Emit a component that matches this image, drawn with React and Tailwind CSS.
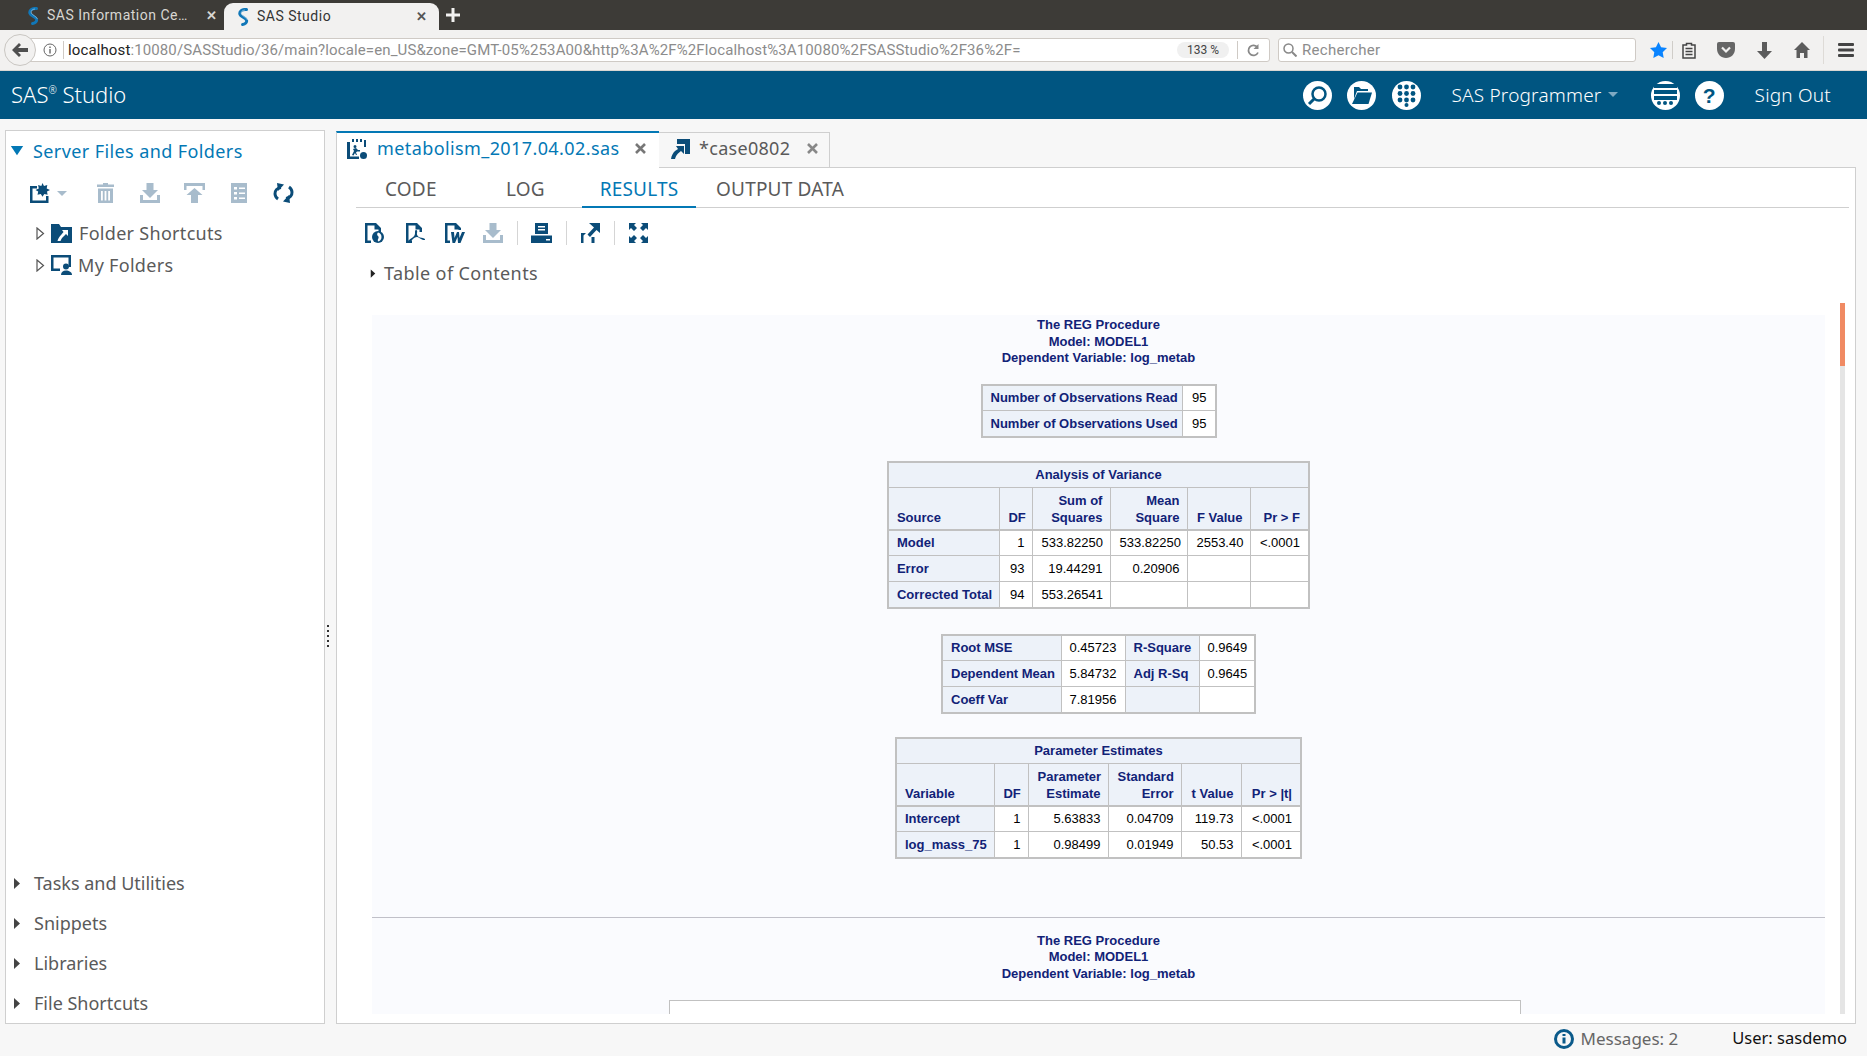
import React from 'react';

const NAVY = '#0b4c78';
const MUTED = '#a8bccc';
const APP_FONT = "font-['Noto_Sans',sans-serif]";

const SasLogo = () => (
  <svg width="12" height="18" viewBox="0 0 12 18" fill="none">
    <path d="M9.500 1.500C5 1 2 3.500 3 6.500c.8 2.400 6 3.400 6.600 6 .4 1.800-1.200 3.600-4 4" stroke="#1177b8" strokeWidth="3" strokeLinecap="round" />
    <path d="M8 2C5 2.200 3.800 4 4.300 6c.7 2 5.500 3.600 6.200 6" stroke="#fff" strokeWidth=".6" opacity=".7" />
  </svg>
);

const Tri = ({ dir = 'right', className = 'text-[#555]', size = 8 }) => (
  <svg width={size} height={size + 3} viewBox="0 0 8 11" className={className}>
    {dir === 'right' ? <path d="M1 0l6 5.500L1 11z" fill="currentColor" /> : <path d="M0 2h8L4 8z" fill="currentColor" />}
  </svg>
);

const TreeArrow = () => (
  <svg width="9" height="13" viewBox="0 0 9 13"><path d="M1 1l6.500 5.500L1 12z" fill="#fff" stroke="#555" strokeWidth="1.200" /></svg>
);

const NewIcon = () => (
  <svg width="20" height="20" viewBox="0 0 20 20" fill={NAVY}>
    <path d="M0 3h7v2.500H2.500v12H16V13h2.500v7H0z" />
    <path d="M12.500 0l1.500 3 3.300-1-.6 3.400L20 7l-3 1.500.6 3.300-3.300-.9-1.800 2.800-1.700-2.800-3.300.9.700-3.300L5.500 7l3.300-1.600-.7-3.400 3.200 1z" />
  </svg>
);
const TrashIcon = () => (
  <svg width="17" height="20" viewBox="0 0 17 20" fill={MUTED}>
    <path d="M6 0h5v1.500h6V4H0V1.500h6zM1 5.500h15V20H1zM4 8v9.500h1.800V8zM7.600 8v9.500h1.800V8zM11.200 8v9.500H13V8z" fillRule="evenodd" />
  </svg>
);
const DownloadIcon = ({ color = MUTED }) => (
  <svg width="20" height="20" viewBox="0 0 20 20" fill={color}>
    <path d="M6.500 0h7v7H18l-8 8-8-8h4.500z" />
    <path d="M0 12h3v5h14v-5h3v8H0z" />
  </svg>
);
const UploadIcon = () => (
  <svg width="21" height="20" viewBox="0 0 21 20" fill={MUTED}>
    <path d="M0 0h21v7h-2.500V3h-16v4H0z" />
    <path d="M10.500 5l8 7H14v8H7v-8H2.500z" />
  </svg>
);
const ChecklistIcon = () => (
  <svg width="16" height="20" viewBox="0 0 16 20">
    <path d="M0 0h16v20H0z" fill={MUTED} />
    <path d="M3 4h3v2.500H3zM8 4.500h6V6H8zM3 9h3v2.500H3zM8 9.500h6V11H8zM3 14h3v2.500H3zM8 14.500h6V16H8z" fill="#fff" />
  </svg>
);
const RefreshIcon = () => (
  <svg width="21" height="20" viewBox="0 0 21 20" fill="none">
    <path d="M8 4.500C4 5 1.800 8 2 11c.2 2.500 1.500 4 3 5" stroke={NAVY} strokeWidth="3" />
    <path d="M4 0l7 1.500L5 8z" fill={NAVY} />
    <path d="M13 15.500c4-.5 6.200-3.500 6-6.500-.2-2.500-1.500-4-3-5" stroke={NAVY} strokeWidth="3" />
    <path d="M17 20l-7-1.500 6-6.500z" fill={NAVY} />
  </svg>
);
const FolderShortcutIcon = () => (
  <svg width="21" height="19" viewBox="0 0 21 19">
    <path d="M0 0h8l2 3h11v16H0z" fill={NAVY} />
    <path d="M11 6h6v6l-2-2-3 3c-1 1-2 2.500-2.500 4H6.500c.5-2.500 2-4.500 3.500-6l2.500-3z" fill="#fff" />
  </svg>
);
const MyFoldersIcon = () => (
  <svg width="21" height="20" viewBox="0 0 21 20">
    <path d="M0 0h20v12h-2.500V2.500h-15v11H9V16H0z" fill={NAVY} />
    <circle cx="15" cy="11.500" r="3" fill={NAVY} />
    <path d="M10 20c0-3 2-4.500 5-4.500s6 1.500 6 4.500z" fill={NAVY} />
  </svg>
);
const ProgramIcon = () => (
  <svg width="20" height="20" viewBox="0 0 20 20">
    <path d="M0 3h3v14.500h9V20H0z" fill={NAVY} />
    <path d="M5 0h2v3H5zM9 0h2v3H9zM13 0h2v3h-2zM17 1h2v7h-2z" fill={NAVY} />
    <path d="M8 6a1.500 1.500 0 1 1 0 3 1.500 1.500 0 0 1 0-3zM5 16l2-4-1-2 3-1 2 2h2v1.500h-3l-1 1 1 2.500H9l-1-2-1.500 2.500z" fill={NAVY} />
    <circle cx="16.500" cy="16.500" r="3.500" fill={NAVY} />
  </svg>
);
const ShortcutIcon = () => (
  <svg width="19" height="20" viewBox="0 0 19 20">
    <path d="M6 0h13v15h-5V5H6z" fill={NAVY} />
    <path d="M5 7h8v8l-3-3-3 2.500C5.500 16 4.500 18 4 20H0c.5-3.500 2-6 4-8l3-2z" fill={NAVY} />
  </svg>
);
const HtmlDocIcon = () => (
  <svg width="19" height="20" viewBox="0 0 19 20">
    <path d="M0 0h11l5 5v4h-2.500V6.500H9.500v-4h-7v15H6V20H0z" fill={NAVY} />
    <circle cx="13" cy="14" r="6" fill={NAVY} />
    <path d="M13 9.500c-1 1-1 2-.5 3s1.500 1 1 2.500-1 1.500-.5 3.500c2-.5 3.500-2 3.500-4.500s-1.500-4-3.500-4.500z" fill="#fff" />
  </svg>
);
const PdfDocIcon = () => (
  <svg width="19" height="20" viewBox="0 0 19 20">
    <path d="M0 0h11l5 5v4h-2.500V6.500H9.500v-4h-7v15H6V20H0z" fill={NAVY} />
    <path d="M10 7c1 0 1.500 1 1 3s1 4 3 4.500 4 .5 5 1.500-1 1.500-3 .5-3.500-2.500-5-2.500-3.500 1-5 3-2 3.500-3 2 1-3 3.500-4.500 2.500-3.500 2.500-5S9 7 10 7z" fill={NAVY} />
  </svg>
);
const WordDocIcon = () => (
  <svg width="20" height="20" viewBox="0 0 20 20">
    <path d="M0 0h11l5 5v2h-2.500v-.500H9.500v-4h-7v15H5V20H0z" fill={NAVY} />
    <path d="M6 9h3l.5 6 2.500-6h2l.5 6 2.500-6H20l-4.500 11h-2.500l-.5-6-2.500 6H7.500z" fill={NAVY} />
  </svg>
);
const PrintIcon = () => (
  <svg width="21" height="20" viewBox="0 0 21 20">
    <path d="M4 0h13v11H4z" fill={NAVY} />
    <path d="M7 3h7v1.500H7zM7 6h7v1.500H7z" fill="#fff" />
    <path d="M0 12.500h21V20H0z" fill={NAVY} />
    <path d="M15 16h4v1.500h-4z" fill="#fff" />
  </svg>
);
const ExpandOutIcon = () => (
  <svg width="19" height="20" viewBox="0 0 19 20">
    <path d="M8 0h11v10l-3.500-3L9 14l-2.500-2.500L13 4.500z" fill={NAVY} />
    <path d="M0 10h5l-2.500 2.500V20H0zM10.500 14h3v6h-3z" fill={NAVY} />
  </svg>
);
const FullscreenIcon = () => (
  <svg width="19" height="20" viewBox="0 0 19 20" fill={NAVY}>
    <path d="M0 0h7L5 2l3 3-3 3-3-3-2 2zM19 0h-7l2 2-3 3 3 3 3-3 2 2zM0 20h7l-2-2 3-3-3-3-3 3-2-2zM19 20h-7l2-2-3-3 3-3 3 3 2-2z" />
  </svg>
);

const HeaderCircle = ({ children }) => (
  <div className="w-[29px] h-[29px] rounded-full bg-white flex items-center justify-center shrink-0">{children}</div>
);

function BrowserTabs() {
  return (
    <div className="h-[30px] bg-[#3d3b37] flex items-end shrink-0 font-['Roboto',sans-serif] text-[14px] tracking-[0.5px]">
      <div className="h-[30px] w-[224px] pl-[27px] pt-[1px] flex items-center text-[#d8d6d2]">
        <SasLogo />
        <span className="ml-[8px] w-[147px] whitespace-nowrap overflow-hidden">SAS Information Ce…</span>
        <span className="ml-[12px] text-[13px] font-bold">✕</span>
      </div>
      <div className="h-[27px] w-[215px] rounded-t-[9px] bg-[#f2f1f0] pl-[13px] flex items-center text-[#333]">
        <SasLogo />
        <span className="ml-[8px] w-[159px]">SAS Studio</span>
        <span className="text-[13px] font-bold text-[#555]">✕</span>
      </div>
      <div className="h-[30px] ml-[7px] flex items-center">
        <svg width="14" height="14" viewBox="0 0 14 14"><path d="M5.500 0h3v5.500H14v3H8.500V14h-3V8.500H0v-3h5.500z" fill="#f2f1f0" /></svg>
      </div>
    </div>
  );
}

function NavBar() {
  return (
    <div className="h-[41px] bg-[#f2f1f0] flex items-center shrink-0 font-['Roboto',sans-serif] border-b border-[#d8d6d2]">
      <div className="relative flex-1 ml-[18px] h-[24px] bg-white border border-[#cfcac5] rounded-[3px] flex items-center text-[15px] tracking-[0.12px] whitespace-nowrap">
        <svg className="ml-[24px] shrink-0" width="14" height="14" viewBox="0 0 14 14" fill="none"><circle cx="7" cy="7" r="6" stroke="#666" /><path d="M7 6v4.500M7 3.500v1.500" stroke="#666" strokeWidth="1.400" /></svg>
        <span className="ml-[6px] h-[18px] border-l border-[#cfcac5]" />
        <span className="ml-[4px] w-[960px] overflow-hidden pt-[1px]">
          <span className="text-[#222]">localhost</span>
          <span className="text-[#8c8c8c]">:10080/SASStudio/36/main?locale=en_US&amp;zone=GMT-05%253A00&amp;http%3A%2F%2Flocalhost%3A10080%2FSASStudio%2F36%2F=</span>
        </span>
        <span className="ml-auto w-[52px] h-[16px] rounded-full bg-[#f0f0f0] text-[#444] text-[12px] tracking-normal flex items-center justify-center">133 %</span>
        <span className="ml-[8px] h-[18px] border-l border-[#cfcac5]" />
        <svg className="ml-[9px] mr-[9px] shrink-0" width="13" height="13" viewBox="0 0 13 13" fill="none"><path d="M10.500 3.500A5 5 0 1 0 11 8.500" stroke="#888" strokeWidth="1.800" /><path d="M11.500 0v5h-5z" fill="#888" /></svg>
        {/* back button sits on top of the url bar */}
        <div className="absolute -left-[15px] top-[-5px] w-[32px] h-[32px] rounded-full bg-[#f2f1f0] border border-[#c9c6c2] flex items-center justify-center">
          <svg width="16" height="14" viewBox="0 0 16 14"><path d="M7 0l2 2-3 3h10v4H6l3 3-2 2-7-7z" fill="#4f4f4f" /></svg>
        </div>
      </div>
      <div className="ml-[8px] w-[358px] h-[24px] bg-white border border-[#cfcac5] rounded-[3px] flex items-center text-[15px] tracking-[0.3px] text-[#8c8c8c]">
        <svg className="ml-[4px]" width="14" height="14" viewBox="0 0 14 14" fill="none"><circle cx="5.500" cy="5.500" r="4.500" stroke="#888" strokeWidth="1.500" /><path d="M9 9l4.500 4.500" stroke="#888" strokeWidth="2" /></svg>
        <span className="ml-[5px] pt-[1px]">Rechercher</span>
      </div>
      <div className="flex items-center">
        <svg className="ml-[14px]" width="17" height="16" viewBox="0 0 17 16"><path d="M8.500 0l2.600 5.300 5.900.8-4.300 4.100 1 5.800-5.200-2.800L3.300 16l1-5.800L0 6.100l5.900-.8z" fill="#0a84ff" /></svg>
        <span className="ml-[5px] h-[18px] border-l border-[#d0cdc9]" />
        <svg className="ml-[9px]" width="14" height="17" viewBox="0 0 14 17" fill="none"><path d="M4.500 1.500h5V3H13v13H1V3h3.500z" fill="#f2f1f0" stroke="#444" strokeWidth="1.500" /><path d="M3.500 6.500h7M3.500 9.500h7M3.500 12.500h7" stroke="#444" strokeWidth="1.500" /></svg>
        <svg className="ml-[21px]" width="18" height="16" viewBox="0 0 18 16"><path d="M2 0h14a2 2 0 0 1 2 2v5c0 5-4 9-9 9s-9-4-9-9V2a2 2 0 0 1 2-2z" fill="#666" /><path d="M5 5.500l4 4 4-4" stroke="#f2f1f0" strokeWidth="2.200" fill="none" /></svg>
        <svg className="ml-[22px]" width="15" height="17" viewBox="0 0 15 17"><path d="M5 0h5v9h5l-7.500 8L0 9h5z" fill="#5c5c5c" /></svg>
        <svg className="ml-[22px]" width="16" height="16" viewBox="0 0 16 16"><path d="M8 0l8 8h-2.500v8h-3.500v-5H6v5H2.500V8H0z" fill="#5c5c5c" /></svg>
        <span className="ml-[13px] h-[28px] border-l border-[#dedbd7]" />
        <svg className="ml-[14px] mr-[13px]" width="16" height="14" viewBox="0 0 16 14" fill="#444"><rect width="16" height="3" rx="1" /><rect y="5.500" width="16" height="3" rx="1" /><rect y="11" width="16" height="3" rx="1" /></svg>
      </div>
    </div>
  );
}

function AppHeader() {
  return (
    <div className={`h-[48px] bg-[#005581] flex items-center shrink-0 text-white font-light ${APP_FONT}`}>
      <span className="ml-[11px] mb-[2px] text-[22px] leading-none">SAS<sup className="text-[10px] -top-[9px]">®</sup> Studio</span>
      <div className="ml-auto flex items-center">
        <HeaderCircle>
          <svg width="21" height="21" viewBox="0 0 21 21" fill="none"><circle cx="12" cy="9" r="6.500" stroke="#005581" strokeWidth="2.500" /><path d="M7 14l-5 5" stroke="#005581" strokeWidth="3" /></svg>
        </HeaderCircle>
        <div className="ml-[15px]">
          <HeaderCircle>
            <svg width="20" height="17" viewBox="0 0 20 17" fill="#005581"><path d="M2 0h5l2 2h7v2H5L2 12z" /><path d="M5.500 5.500H20L16.500 17H0z" /></svg>
          </HeaderCircle>
        </div>
        <div className="ml-[16px]">
          <HeaderCircle>
            <svg width="19" height="23" viewBox="0 0 19 23" fill="#005581">
              <circle cx="3" cy="3" r="2.400" /><circle cx="9.500" cy="3" r="2.400" /><circle cx="16" cy="3" r="2.400" />
              <circle cx="3" cy="9.500" r="2.400" /><circle cx="9.500" cy="9.500" r="2.400" /><circle cx="16" cy="9.500" r="2.400" />
              <circle cx="3" cy="16" r="2.400" /><circle cx="9.500" cy="16" r="2.400" /><circle cx="16" cy="16" r="2.400" />
              <circle cx="9.500" cy="21" r="2" />
            </svg>
          </HeaderCircle>
        </div>
        <span className="ml-[30px] text-[19px] tracking-[0.2px]">SAS Programmer</span>
        <span className="ml-[6px] mt-[-2px] w-0 h-0 border-x-[5px] border-x-transparent border-t-[5px] border-t-[#7ea9c2]" />
        <div className="ml-[33px]">
          <HeaderCircle>
            <svg width="23" height="22" viewBox="0 0 23 22" fill="#005581">
              <rect width="23" height="4" y="0" /><rect width="23" height="4" y="6" /><rect width="23" height="4" y="12" />
              <circle cx="5" cy="19" r="2" /><circle cx="11" cy="19" r="2" /><circle cx="17" cy="19" r="2" />
            </svg>
          </HeaderCircle>
        </div>
        <div className="ml-[15px]">
          <HeaderCircle>
            <span className="text-[#005581] text-[21px] font-black font-['Liberation_Sans',sans-serif] leading-none">?</span>
          </HeaderCircle>
        </div>
        <span className="ml-[31px] mr-[36px] text-[19px] tracking-[0.2px]">Sign Out</span>
      </div>
    </div>
  );
}

const TREE_BOTTOM = ['Tasks and Utilities', 'Snippets', 'Libraries', 'File Shortcuts'];

function LeftPanel() {
  return (
    <div className="w-[320px] ml-[5px] bg-white border border-[#cfcfcf] flex flex-col shrink-0 text-[18px] tracking-[0.3px] text-[#5a5a5a]">
      <div className="flex items-center h-[20px] mt-[10px] pl-[4px]">
        <Tri dir="down" size={14} className="text-[#0378b5]" />
        <span className="ml-[9px] text-[#0378b5] whitespace-nowrap tracking-[0.4px]">Server Files and Folders</span>
      </div>
      <div className="flex items-center mt-[22px] pl-[24px]">
        <NewIcon />
        <span className="ml-[7px] w-0 h-0 border-x-[5px] border-x-transparent border-t-[5px] border-t-[#a8bccc]" />
        <span className="ml-[30px]"><TrashIcon /></span>
        <span className="ml-[26px]"><DownloadIcon /></span>
        <span className="ml-[24px]"><UploadIcon /></span>
        <span className="ml-[26px]"><ChecklistIcon /></span>
        <span className="ml-[26px]"><RefreshIcon /></span>
      </div>
      <div className="flex items-center h-[32px] mt-[14px] pl-[30px]">
        <TreeArrow />
        <span className="ml-[6px]"><FolderShortcutIcon /></span>
        <span className="ml-[7px]">Folder Shortcuts</span>
      </div>
      <div className="flex items-center h-[32px] pl-[30px]">
        <TreeArrow />
        <span className="ml-[6px]"><MyFoldersIcon /></span>
        <span className="ml-[6px]">My Folders</span>
      </div>
      <div className="mt-auto">
        {TREE_BOTTOM.map((label) => (
          <div key={label} className="flex items-center h-[40px] pl-[7px]">
            <Tri className="text-[#444]" />
            <span className="ml-[13px] tracking-normal">{label}</span>
          </div>
        ))}
      </div>
    </div>
  );
}

const th = 'bg-[#edf2f9] text-[#112277] font-bold border border-[#c1c1c1] px-[8px] h-[26px] whitespace-nowrap';
const td = 'bg-white text-black border border-[#c1c1c1] px-[8px] text-right h-[26px] whitespace-nowrap';

function SasTable({ title, widths, head, rows, width }) {
  return (
    <table className="table-fixed border-collapse border-2 border-[#c1c1c1] shrink-0" style={{ width }}>
      <colgroup>
        {widths.map((w, i) => <col key={i} style={{ width: w }} />)}
      </colgroup>
      <tbody>
        {title && (
          <tr><th colSpan={widths.length} className={`${th} text-center align-middle`}>{title}</th></tr>
        )}
        {head && (
          <tr>
            {head.map((h, i) => (
              <th key={i} className={`${th} ${i === 0 ? 'text-left' : 'text-right'} align-bottom h-[42px] leading-[17px] pb-[3px] border-b-2`}>
                {h.split('/').map((part) => <div key={part}>{part}</div>)}
              </th>
            ))}
          </tr>
        )}
        {rows.map((row, r) => (
          <tr key={r}>
            {row.map((cell, c) => (
              cell.h
                ? <th key={c} className={`${th} text-left align-middle`}>{cell.h}</th>
                : <td key={c} className={td}>{cell}</td>
            ))}
          </tr>
        ))}
      </tbody>
    </table>
  );
}

const RegTitle = () => (
  <div className="text-center text-[#112277] font-bold leading-[16.5px]">
    <div>The REG Procedure</div>
    <div>Model: MODEL1</div>
    <div>Dependent Variable: log_metab</div>
  </div>
);

function Results() {
  return (
    <div className="w-[1453px] ml-[35px] h-[699px] bg-[#fafbfe] overflow-hidden flex flex-col items-center pt-[2px] font-['Liberation_Sans',sans-serif] text-[13px] tracking-normal shrink-0">
      <RegTitle />
      <div className="mt-[17px]">
        <SasTable
          width={234}
          widths={[201, 33]}
          rows={[
            [{ h: 'Number of Observations Read' }, '95'],
            [{ h: 'Number of Observations Used' }, '95'],
          ]}
        />
      </div>
      <div className="mt-[23px]">
        <SasTable
          width={421}
          title="Analysis of Variance"
          widths={[112, 33, 78, 77, 63, 58]}
          head={['Source', 'DF', 'Sum of/Squares', 'Mean/Square', 'F Value', 'Pr > F']}
          rows={[
            [{ h: 'Model' }, '1', '533.82250', '533.82250', '2553.40', '<.0001'],
            [{ h: 'Error' }, '93', '19.44291', '0.20906', '', ''],
            [{ h: 'Corrected Total' }, '94', '553.26541', '', '', ''],
          ]}
        />
      </div>
      <div className="mt-[25px]">
        <SasTable
          width={313}
          widths={[119, 64, 74, 56]}
          rows={[
            [{ h: 'Root MSE' }, '0.45723', { h: 'R-Square' }, '0.9649'],
            [{ h: 'Dependent Mean' }, '5.84732', { h: 'Adj R-Sq' }, '0.9645'],
            [{ h: 'Coeff Var' }, '7.81956', { h: '\u00a0' }, ''],
          ]}
        />
      </div>
      <div className="mt-[23px]">
        <SasTable
          width={405}
          title="Parameter Estimates"
          widths={[99, 34, 80, 73, 60, 59]}
          head={['Variable', 'DF', 'Parameter/Estimate', 'Standard/Error', 't Value', 'Pr > |t|']}
          rows={[
            [{ h: 'Intercept' }, '1', '5.63833', '0.04709', '119.73', '<.0001'],
            [{ h: 'log_mass_75' }, '1', '0.98499', '0.01949', '50.53', '<.0001'],
          ]}
        />
      </div>
      <div className="w-full mt-[58px] border-t border-[#c0c0c8]" />
      <div className="mt-[15px]"><RegTitle /></div>
      <div className="self-start ml-[297px] mt-[18px] w-[852px] h-[40px] bg-white border border-[#c1c1c1] shrink-0" />
    </div>
  );
}

function RightPanel() {
  return (
    <div className="flex-1 flex flex-col mr-[11px] min-w-0 text-[18px] tracking-[0.3px] text-[#5a5a5a]">
      <div className="flex h-[36px] shrink-0 mt-[1px]">
        <div className="w-[323px] -mb-px z-10 bg-white border-t-2 border-t-[#0378b5] border-l border-l-[#cfcfcf] flex items-center pl-[10px] pb-[4px]">
          <ProgramIcon />
          <span className="ml-[10px] w-[258px] text-[#0378b5] whitespace-nowrap tracking-[0.4px]">metabolism_2017.04.02.sas</span>
          <svg width="11" height="11" viewBox="0 0 11 11"><path d="M1 1l9 9M10 1l-9 9" stroke="#777" strokeWidth="2.600" /></svg>
        </div>
        <div className="w-[171px] mt-[1px] bg-[#f7f7f7] border-t border-r border-[#cfcfcf] flex items-center pl-[12px] pb-[3px]">
          <ShortcutIcon />
          <span className="ml-[9px] w-[108px]">*case0802</span>
          <svg width="11" height="11" viewBox="0 0 11 11"><path d="M1 1l9 9M10 1l-9 9" stroke="#888" strokeWidth="2.600" /></svg>
        </div>
      </div>
      <div className="flex-1 min-h-0 bg-white border border-[#cfcfcf] flex flex-col">
        <div className="flex h-[40px] ml-[19px] mr-[6px] border-b border-[#cfcfcf] shrink-0 text-[19px] tracking-[0.2px] pt-[4px]">
          <div className="w-[150px] flex items-center pl-[29px]">CODE</div>
          <div className="w-[76px] flex items-center">LOG</div>
          <div className="w-[114px] -mb-px flex items-center justify-center text-[#0378b5] border-b-2 border-[#0378b5]">RESULTS</div>
          <div className="flex items-center pl-[20px]">OUTPUT DATA</div>
        </div>
        <div className="flex items-center h-[20px] mt-[15px] ml-[28px] shrink-0">
          <HtmlDocIcon />
          <span className="ml-[22px]"><PdfDocIcon /></span>
          <span className="ml-[20px]"><WordDocIcon /></span>
          <span className="ml-[18px]"><DownloadIcon /></span>
          <span className="ml-[14px] h-[24px] border-l border-[#d5d5d5]" />
          <span className="ml-[13px]"><PrintIcon /></span>
          <span className="ml-[14px] h-[24px] border-l border-[#d5d5d5]" />
          <span className="ml-[14px]"><ExpandOutIcon /></span>
          <span className="ml-[14px] h-[24px] border-l border-[#d5d5d5]" />
          <span className="ml-[14px]"><FullscreenIcon /></span>
        </div>
        <div className="flex items-center h-[24px] mt-[18px] ml-[33px] shrink-0">
          <Tri size={6} className="text-[#222]" />
          <span className="ml-[8px] tracking-[0.4px]">Table of Contents</span>
        </div>
        <div className="flex mt-[30px]">
          <Results />
          <div className="ml-[15px] mt-[-12px] w-[5px] h-[711px] bg-[#e5e5e5] shrink-0">
            <div className="h-[63px] bg-[#f08a63]" />
          </div>
        </div>
      </div>
    </div>
  );
}

export default function App() {
  return (
    <div className={`w-full h-screen overflow-hidden flex flex-col bg-[#f7f7f7] ${APP_FONT}`}>
      <BrowserTabs />
      <NavBar />
      <AppHeader />
      <div className="flex flex-1 min-h-0 pt-[11px]">
        <LeftPanel />
        <div className="w-[11px] shrink-0 flex flex-col items-start justify-center gap-[3px] pl-[2px] pt-[118px]">
          {[0, 1, 2, 3, 4].map((i) => <span key={i} className="w-[2px] h-[2px] bg-[#333]" />)}
        </div>
        <RightPanel />
      </div>
      <div className="h-[32px] shrink-0 flex items-center justify-end text-[16.5px] pb-[3px]">
        <svg width="20" height="20" viewBox="0 0 20 20" fill="none"><circle cx="10" cy="10" r="8.500" stroke="#0b5a8a" strokeWidth="3" /><path d="M10 8.500v6M10 5v2" stroke="#0b5a8a" strokeWidth="3" /></svg>
        <span className="ml-[7px] text-[17px] text-[#666]">Messages: 2</span>
        <span className="ml-[54px] mr-[20px] text-[#111]">User: sasdemo</span>
      </div>
    </div>
  );
}
